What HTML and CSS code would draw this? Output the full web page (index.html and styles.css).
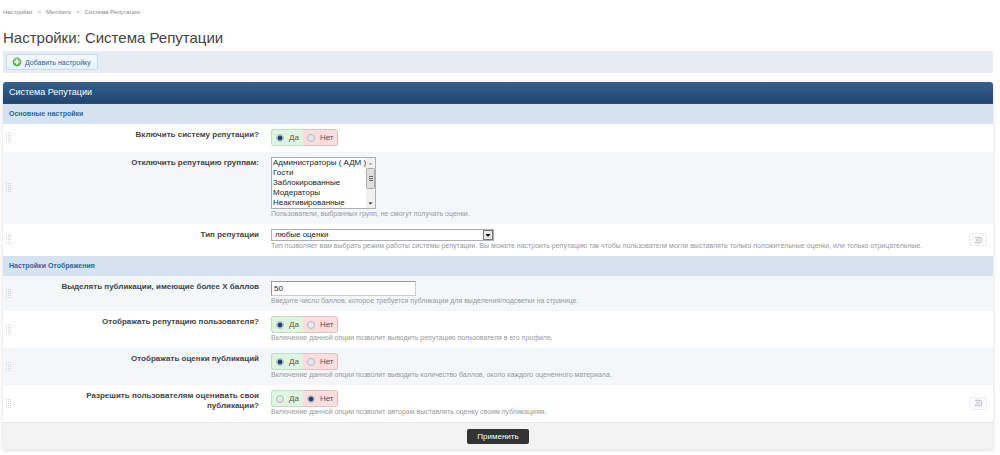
FILE: index.html
```html
<!DOCTYPE html>
<html lang="ru">
<head>
<meta charset="utf-8">
<title>Настройки: Система Репутации</title>
<link rel="stylesheet" href="styles.css">
</head>
<body>
<svg class="defs" width="0" height="0" aria-hidden="true">
  <symbol id="revert" viewBox="0 0 10 8"><path d="M2 1.5h5a1.5 1.5 0 0 1 1.5 1.5v2a1.5 1.5 0 0 1-1.5 1.5H1.5M3 4h4" fill="none" stroke="#c8cccf" stroke-width="1.3"/></symbol>
  <symbol id="grip" viewBox="0 0 5 9"><path d="M0 .5h1M2 .5h1M4 .5h1M0 2.5h1M2 2.5h1M4 2.5h1M0 4.5h1M2 4.5h1M4 4.5h1M0 6.5h1M2 6.5h1M4 6.5h1M0 8.5h1M2 8.5h1M4 8.5h1" stroke="#d3d6d9"/></symbol>
</svg>
<nav class="crumbs"><a href="#">Настройки</a><span>&gt;</span><a href="#">Members</a><span>&gt;</span><a href="#">Система Репутации</a></nav>
<h1 class="title">Настройки: Система Репутации</h1>
<div class="toolbar">
  <button class="add" type="button"><svg width="10" height="10" viewBox="0 0 10 10"><circle cx="5" cy="5" r="4.4" fill="#62b14e"/><circle cx="5" cy="4" r="3" fill="#86c873"/><path d="M5 2.5v5M2.5 5h5" stroke="#fff" stroke-width="1.6"/></svg>Добавить настройку</button>
</div>
<form class="panel">
  <h2 class="panel-title">Система Репутации</h2>
  <h3 class="section">Основные настройки</h3>
  <div class="row">
    <svg class="grip"><use href="#grip"/></svg>
    <div class="label" id="l1">Включить систему репутации?</div>
    <div class="field">
      <div class="yesno" role="radiogroup" aria-labelledby="l1"><label class="yes"><input type="radio" name="r1" checked>Да</label><label class="no"><input type="radio" name="r1">Нет</label></div>
    </div>
  </div>
  <div class="row alt">
    <svg class="grip"><use href="#grip"/></svg>
    <label class="label" for="groups">Отключить репутацию группам:</label>
    <div class="field">
      <div class="listbox">
        <select class="list" id="groups" multiple size="5"><option>Администраторы ( АДМ )</option><option>Гости</option><option>Заблокированные</option><option>Модераторы</option><option>Неактивированные</option><option>Пользователи</option><option>Супермодераторы</option><option>Друзья</option></select>
        <svg class="scroll" width="9" height="50" viewBox="0 0 9 50" aria-hidden="true">
          <path d="M0 0h9v50H0z" fill="#f0f0f0"/>
          <path d="M2.500 6.500l2-2 2 2z" fill="#999"/>
          <rect x=".5" y="10.500" width="8" height="20" rx="1" fill="#dedede" stroke="#acacac"/>
          <path d="M3 18.500h4M3 20.500h4M3 22.500h4" stroke="#666"/>
          <path d="M2.500 44.500l2 2 2-2z" fill="#222"/>
        </svg>
      </div>
      <p class="hint">Пользователи, выбранных групп, не смогут получать оценки.</p>
    </div>
  </div>
  <div class="row">
    <svg class="grip"><use href="#grip"/></svg>
    <label class="label" for="kind">Тип репутации</label>
    <div class="field">
      <select class="drop" id="kind"><option>любые оценки</option></select>
      <p class="hint">Тип позволяет вам выбрать режим работы системы репутации. Вы можете настроить репутацию так чтобы пользователи могли выставлять только положительные оценки, или только отрицательные.</p>
    </div>
    <button class="revert" type="button" aria-label="Сбросить"><svg width="10" height="8"><use href="#revert"/></svg></button>
  </div>
  <h3 class="section">Настройки Отображения</h3>
  <div class="row alt">
    <svg class="grip"><use href="#grip"/></svg>
    <label class="label" for="points">Выделять публикации, имеющие более X баллов</label>
    <div class="field">
      <input class="text" id="points" type="text" value="50">
      <p class="hint">Введите число баллов, которое требуется публикации для выделения/подсветки на странице.</p>
    </div>
  </div>
  <div class="row">
    <svg class="grip"><use href="#grip"/></svg>
    <div class="label" id="l2">Отображать репутацию пользователя?</div>
    <div class="field">
      <div class="yesno" role="radiogroup" aria-labelledby="l2"><label class="yes"><input type="radio" name="r2" checked>Да</label><label class="no"><input type="radio" name="r2">Нет</label></div>
      <p class="hint">Включение данной опции позволит выводить репутацию пользователя в его профиле.</p>
    </div>
  </div>
  <div class="row alt">
    <svg class="grip"><use href="#grip"/></svg>
    <div class="label" id="l3">Отображать оценки публикаций</div>
    <div class="field">
      <div class="yesno" role="radiogroup" aria-labelledby="l3"><label class="yes"><input type="radio" name="r3" checked>Да</label><label class="no"><input type="radio" name="r3">Нет</label></div>
      <p class="hint">Включение данной опции позволит выводить количество баллов, около каждого оцененного материала.</p>
    </div>
  </div>
  <div class="row">
    <svg class="grip"><use href="#grip"/></svg>
    <div class="label" id="l4">Разрешить пользователям оценивать свои публикации?</div>
    <div class="field">
      <div class="yesno" role="radiogroup" aria-labelledby="l4"><label class="yes"><input type="radio" name="r4">Да</label><label class="no"><input type="radio" name="r4" checked>Нет</label></div>
      <p class="hint">Включение данной опции позволит авторам выставлять оценку своим публикациям.</p>
    </div>
    <button class="revert" type="button" aria-label="Сбросить"><svg width="10" height="8"><use href="#revert"/></svg></button>
  </div>
  <div class="footer"><button class="apply" type="submit">Применить</button></div>
</form>
</body>
</html>
```
FILE: styles.css
```css
* { box-sizing: border-box; }
body {
  margin: 0;
  padding: 8px 7px 4px 3px;
  background: #fff;
  color: #444;
  font: 8px/10px "Liberation Sans", Arial, sans-serif;
}
button, input, select { font-family: inherit; margin: 0; }
h1, h2, h3, p { margin: 0; font-weight: normal; }
.defs { display: block; }

.crumbs { display: flex; gap: 5px; font-size: 6px; line-height: 8px; color: #999; }
.crumbs a { color: #888; text-decoration: none; }
.title { margin-top: 13px; font-size: 15px; line-height: 18px; color: #444; }

.toolbar { margin-top: 4px; padding: 3px; background: #e8ecf4; }
.add {
  display: flex;
  align-items: center;
  gap: 3px;
  height: 16px;
  padding: 0 6px 0 5px;
  border: 1px solid #c9dcec;
  border-radius: 2px;
  background: linear-gradient(#f3f9ff, #e5f1fb);
  color: #3a618f;
  font-size: 7px;
}

.panel {
  margin-top: 9px;
  border-radius: 3px 3px 0 0;
  box-shadow: 0 1px 4px rgba(0, 0, 0, .15);
}
.panel-title {
  padding: 0 6px;
  border-radius: 3px 3px 0 0;
  border-bottom: 1px solid #2d4a70;
  background: linear-gradient(#35618d, #23456f);
  color: #fff;
  font-size: 9px;
  line-height: 21px;
}
.section {
  padding: 0 6px;
  background: #d6e3f0;
  color: #336699;
  font-size: 7px;
  font-weight: bold;
  line-height: 20px;
}

.row {
  display: grid;
  grid-template-columns: 6px 247px 1fr 18px;
  column-gap: 6px;
  padding: 5px 6px 6px 3px;
}
.row.alt { background: #f3f7fa; }
.grip { align-self: center; width: 5px; height: 9px; }
.label {
  padding: 1px 6px 0 20px;
  text-align: right;
  font-weight: bold;
}
.hint { color: #999; font-size: 7px; line-height: 9px; }
.field { min-width: 0; }

.yesno {
  display: flex;
  width: max-content;
  height: 17px;
}
.yesno label {
  display: flex;
  align-items: center;
  gap: 5px;
  padding: 0 4px;
  border: 1px solid;
  color: #555;
}
.yesno .yes { background: #e0f5e1; border-color: #bfdfc2; border-right: 0; border-radius: 3px 0 0 3px; }
.yesno .no { background: #f8dedf; border-color: #e5c0c2; border-left: 0; border-radius: 0 3px 3px 0; padding-right: 3px; }
.yesno input {
  appearance: none;
  width: 8px;
  height: 8px;
  border: 1px solid #b4bbc1;
  border-radius: 50%;
  background: #e6e9eb;
}
.yesno input:checked { background: radial-gradient(#1f4672 0 2px, #d4e0e9 3px); }

.listbox {
  display: flex;
  width: max-content;
  border: 1px solid #aab0b6;
  background: #fff;
}
.list {
  width: 94px;
  height: 50px;
  padding: 0;
  border: 0;
  border-radius: 0;
  background: #fff;
  color: #222;
  font-size: 8px;
  overflow-y: scroll;
  scrollbar-width: none;
}
.list option { padding: 0 0 0 1px; min-height: 10px; line-height: 10px; }
.scroll { display: block; }

.drop {
  display: block;
  appearance: none;
  width: 223px;
  height: 12px;
  padding: 0 12px 0 3px;
  border: 1px solid #aab0b6;
  border-radius: 0;
  background: #fff url("data:image/svg+xml,%3Csvg xmlns='http://www.w3.org/2000/svg' viewBox='0 0 10 10'%3E%3Crect x='.5' y='.5' width='9' height='9' fill='%23e6e6e6' stroke='%23777'/%3E%3Cpath d='M2.5 4h5L5 7z' fill='%23111'/%3E%3C/svg%3E") right center / 10px 10px no-repeat;
  color: #222;
  font-size: 8px;
  line-height: 10px;
}
.text {
  display: block;
  width: 145px;
  height: 15px;
  padding: 0 2px;
  border: 1px solid #ccc;
  border-top-color: #999;
  border-left-color: #999;
  background: #fff;
  color: #222;
  font-size: 8px;
}
.revert {
  align-self: center;
  display: flex;
  align-items: center;
  justify-content: center;
  width: 18px;
  height: 13px;
  padding: 0;
  border: 1px solid #eceef0;
  border-radius: 2px;
  background: #fafbfc;
}
.footer {
  display: flex;
  justify-content: center;
  padding: 6px 6px 5px;
  border-top: 1px solid #e4e4e4;
  background: #f3f3f3;
}
.apply {
  height: 15px;
  padding: 0 10px;
  border: 0;
  border-radius: 2px;
  background: #333;
  color: #fff;
  font-size: 8px;
}
```
